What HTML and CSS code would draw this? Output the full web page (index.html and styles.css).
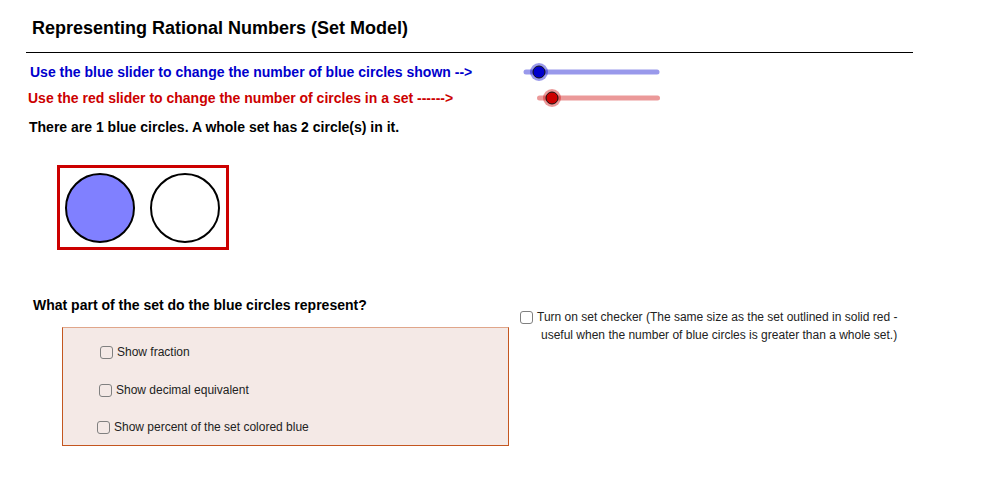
FILE: index.html
```html
<!DOCTYPE html>
<html lang="en">
<head>
  <meta charset="UTF-8" />
  <title>Representing Rational Numbers (Set Model)</title>
  <link rel="stylesheet" href="styles.css">
</head>
<body>
  <div class="applet">
    <h1 class="title">Representing Rational Numbers (Set Model)</h1>
    <div class="rule"></div>

    <div class="row row-blue">
      <span class="hint hint-blue">Use the blue slider to change the number of blue circles shown --&gt;</span>
      <svg class="slider" width="140" height="20" viewBox="0 0 140 20">
        <line x1="4" y1="10" x2="135" y2="10" stroke="rgba(0,0,204,0.4)" stroke-width="5" stroke-linecap="round" />
        <circle cx="17" cy="10" r="9" fill="rgba(0,0,204,0.4)" />
        <circle cx="17" cy="10" r="6" fill="#0000cc" stroke="#111" stroke-width="1" />
      </svg>
    </div>

    <div class="row row-red">
      <span class="hint hint-red">Use the red slider to change the number of circles in a set ------&gt;</span>
      <svg class="slider" width="130" height="20" viewBox="0 0 130 20">
        <line x1="4.5" y1="10" x2="122.5" y2="10" stroke="rgba(204,0,0,0.4)" stroke-width="5" stroke-linecap="round" />
        <circle cx="17" cy="10" r="9" fill="rgba(204,0,0,0.4)" />
        <circle cx="17" cy="10" r="6" fill="#cc0000" stroke="#111" stroke-width="1" />
      </svg>
    </div>

    <div class="row row-info">
      <span class="hint">There are 1 blue circles. A whole set has 2 circle(s) in it.</span>
    </div>

    <div class="set-box">
      <div class="circle filled"></div>
      <div class="circle"></div>
    </div>

    <div class="lower">
      <div class="question-col">
        <div class="row">
          <span class="hint">What part of the set do the blue circles represent?</span>
        </div>
        <div class="options">
          <label class="option"><span class="check"></span>Show fraction</label>
          <label class="option"><span class="check"></span>Show decimal equivalent</label>
          <label class="option"><span class="check"></span>Show percent of the set colored blue</label>
        </div>
      </div>

      <div class="checker">
        <span class="check"></span>
        <div class="checker-text">
          <span class="line">Turn on set checker (The same size as the set outlined in solid red -</span>
          <span class="line line-2">useful when the number of blue circles is greater than a whole set.)</span>
        </div>
      </div>
    </div>
  </div>
</body>
</html>
```

FILE: styles.css
```css
* {
  box-sizing: border-box;
}

body {
  margin: 0;
  background: #fff;
  font-family: "Liberation Sans", Arial, sans-serif;
  color: #000;
}

.applet {
  width: 988px;
  height: 495px;
  overflow: hidden;
}

.title {
  margin: 0;
  padding: 16px 0 0 32px;
  font-size: 18px;
  line-height: 24px;
  font-weight: bold;
}

.rule {
  width: 887px;
  margin: 12px 0 0 26px;
  border-top: 1px solid #000;
}

.row {
  display: flex;
  align-items: center;
  height: 26px;
}

.hint {
  font-size: 14px;
  font-weight: bold;
  white-space: nowrap;
}

.row-blue {
  margin-top: 6px;
  padding-left: 30px;
}

.row-red {
  padding-left: 28px;
}

.row-info {
  margin-top: 3px;
  padding-left: 29px;
}

.hint-blue {
  width: 492px;
  color: #0000cc;
}

.hint-red {
  width: 507px;
  color: #cc0000;
}

.slider {
  display: block;
}

/* the set outlined in solid red */
.set-box {
  display: flex;
  gap: 15px;
  width: 172px;
  height: 85px;
  margin: 25px 0 0 57px;
  padding: 5px 5px 4px;
  border: 3px solid #cc0000;
}

.circle {
  width: 70px;
  height: 70px;
  border: 2px solid #000;
  border-radius: 50%;
  background: #fff;
}

.circle.filled {
  background: #8080ff;
}

.lower {
  display: flex;
  margin-top: 42px;
  padding-left: 33px;
}

.question-col {
  width: 476px;
}

.options {
  width: 447px;
  height: 119px;
  margin: 9px 0 0 29px;
  padding-top: 15px;
  background: #f4e9e6;
  border: 1px solid #c4561f;
  border-top-color: #e0a68a;
}

.option {
  display: flex;
  align-items: center;
  gap: 4px;
  height: 18px;
  font-size: 12px;
  color: #222;
}

.option:nth-child(1) {
  padding-left: 37px;
}

.option:nth-child(2) {
  margin-top: 20px;
  padding-left: 36px;
}

.option:nth-child(3) {
  margin-top: 19px;
  padding-left: 34px;
}

.check {
  flex: none;
  width: 13px;
  height: 13px;
  border: 1.5px solid #808080;
  border-radius: 3px;
}

.checker {
  display: flex;
  align-items: flex-start;
  gap: 4px;
  margin-left: 11px;
  padding-top: 16px;
  font-size: 12px;
  line-height: 18px;
  color: #222;
}

.checker .check {
  margin-top: 3px;
}

.checker-text .line {
  display: block;
  white-space: nowrap;
}

.checker-text .line-2 {
  padding-left: 4px;
}
```
